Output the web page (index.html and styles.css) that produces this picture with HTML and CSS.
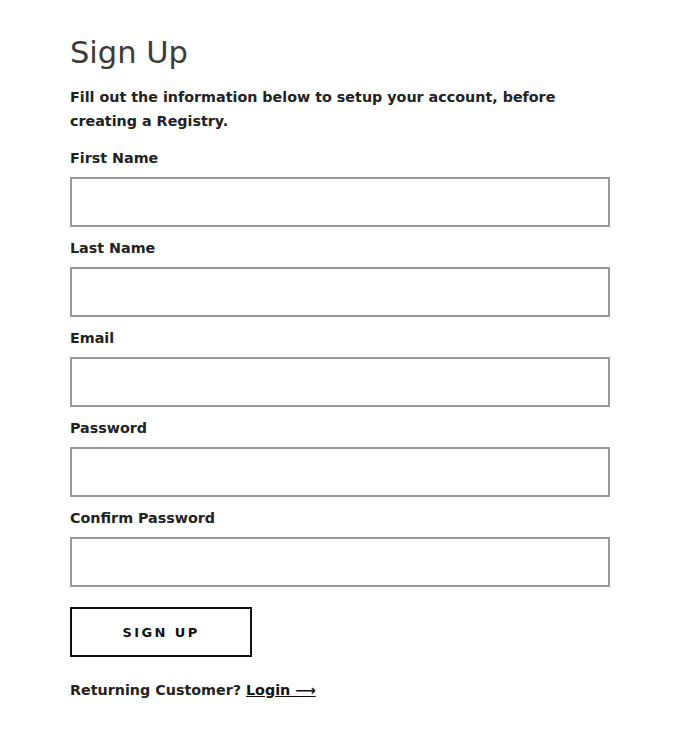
FILE: index.html
```html
<!DOCTYPE html>
<html lang="en">

<head>
    <meta charset="UTF-8">
    <meta name="viewport" content="width=device-width, initial-scale=1.0">
    <title>Sign Up</title>
    <link rel="stylesheet" href="styles.css">
</head>

<body>
    <div class="signup">
        <h1 class="title">Sign Up</h1>
        <p class="intro">Fill out the information below to setup your account, before creating a Registry.</p>

        <form class="form">
            <div class="field">
                <label for="first">First Name</label>
                <input id="first" type="text">
            </div>
            <div class="field">
                <label for="last">Last Name</label>
                <input id="last" type="text">
            </div>
            <div class="field">
                <label for="email">Email</label>
                <input id="email" type="email">
            </div>
            <div class="field">
                <label for="pass">Password</label>
                <input id="pass" type="password">
            </div>
            <div class="field">
                <label for="pass2">Confirm Password</label>
                <input id="pass2" type="password">
            </div>
            <button class="btn" type="button">Sign Up</button>
        </form>

        <p class="returning">Returning Customer? <a href="#">Login &#10230;</a></p>
    </div>
</body>

</html>
```

FILE: styles.css
```css
html,
body {
    margin: 0;
    padding: 0;
    background: #fff;
    font-family: "DejaVu Sans", sans-serif;
    color: #222;
}

.signup {
    width: 540px;
    padding: 31px 0 0 70px;
}

.title {
    margin: 0 0 10px;
    font-size: 30.5px;
    font-weight: 400;
    line-height: 44px;
    color: #3b3b3b;
}

.intro {
    margin: 0 0 14px;
    font-size: 14.3px;
    font-weight: 600;
    line-height: 24px;
}

.field {
    margin-bottom: 10px;
}

.field label {
    display: block;
    padding-top: 1px;
    font-size: 14.3px;
    font-weight: 600;
    line-height: 20px;
    margin-bottom: 9px;
}

.field input {
    display: block;
    box-sizing: border-box;
    width: 540px;
    height: 50px;
    border: 2px solid #979797;
    border-radius: 0;
    padding: 0 12px;
    font-size: 15px;
    outline: none;
}

.btn {
    display: block;
    box-sizing: border-box;
    width: 182px;
    height: 50px;
    margin-top: 20px;
    border: 2px solid #111;
    background: #fff;
    font-family: inherit;
    font-size: 13px;
    font-weight: 600;
    letter-spacing: 2.4px;
    text-transform: uppercase;
    color: #111;
}

.returning {
    margin: 22px 0 0;
    padding-top: 1px;
    font-size: 14.3px;
    font-weight: 600;
    line-height: 20px;
}

.returning a {
    color: #111;
}
```
